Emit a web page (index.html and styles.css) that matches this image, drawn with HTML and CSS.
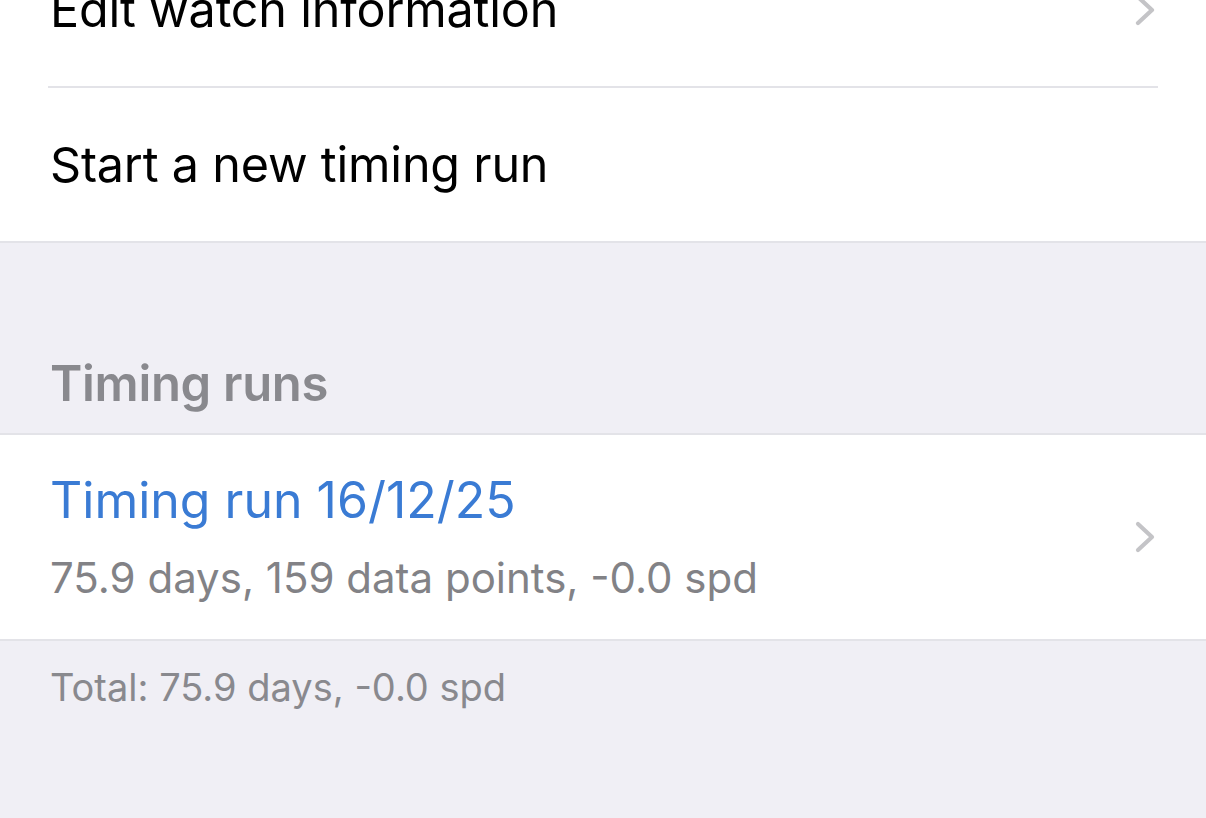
FILE: index.html
```html
<!DOCTYPE html>
<html>
<head>
<meta charset="utf-8">
<link rel="stylesheet" href="styles.css">
</head>
<body>
<div class="page">
  <div class="group">
    <div class="row row-first">
      <span class="label">Edit watch information</span>
      <svg class="chev" viewBox="0 0 24 32" width="24" height="32"><path d="M4 3 L18 16 L4 29" fill="none" stroke="#c4c4c7" stroke-width="4.2" stroke-linecap="round" stroke-linejoin="round"/></svg>
    </div>
    <div class="sep"></div>
    <div class="row row-plain">
      <span class="label">Start a new timing run</span>
    </div>
  </div>
  <div class="header">Timing runs</div>
  <div class="group">
    <div class="row row-run">
      <div class="texts">
        <div class="title">Timing run 16/12/25</div>
        <div class="sub">75.9 days, 159 data points, -0.0 spd</div>
      </div>
      <svg class="chev" viewBox="0 0 24 32" width="24" height="32"><path d="M4 3 L18 16 L4 29" fill="none" stroke="#c4c4c7" stroke-width="4.2" stroke-linecap="round" stroke-linejoin="round"/></svg>
    </div>
  </div>
  <div class="footer">Total: 75.9 days, -0.0 spd</div>
</div>
</body>
</html>
```
FILE: styles.css
```css
html, body {
  margin: 0;
  padding: 0;
  background: #f0eff5;
  font-family: Inter, "Noto Sans", "Liberation Sans", sans-serif;
  height: 100%;
  overflow: hidden;
}
.page {
  margin-top: -67px;
}
.group {
  background: #ffffff;
  border-bottom: 2px solid #e3e3e8;
}
.header + .group {
  border-top: 2px solid #e3e3e8;
}
.row {
  display: flex;
  align-items: center;
  justify-content: space-between;
  padding: 0 48px 0 50px;
}
.row-first, .row-plain {
  height: 153px;
}
.label {
  font-size: 48.5px;
  color: #000;
  letter-spacing: -0.2px;
}
.sep {
  height: 2px;
  background: #e3e3e8;
  margin: 0 48px;
}
.header {
  height: 190px;
  box-sizing: border-box;
  padding: 0 50px 20px;
  display: flex;
  align-items: flex-end;
  font-size: 49px;
  font-weight: 600;
  color: #89898e;
  letter-spacing: -0.3px;
}
.row-run {
  height: 204px;
}
.texts {
  display: flex;
  flex-direction: column;
  gap: 22px;
}
.title {
  font-size: 50px;
  line-height: 60px;
  color: #3a7bd4;
}
.sub {
  font-size: 42px;
  line-height: 52px;
  color: #828286;
}
.footer {
  padding: 23px 50px 0;
  font-size: 38px;
  color: #89898e;
}
```
